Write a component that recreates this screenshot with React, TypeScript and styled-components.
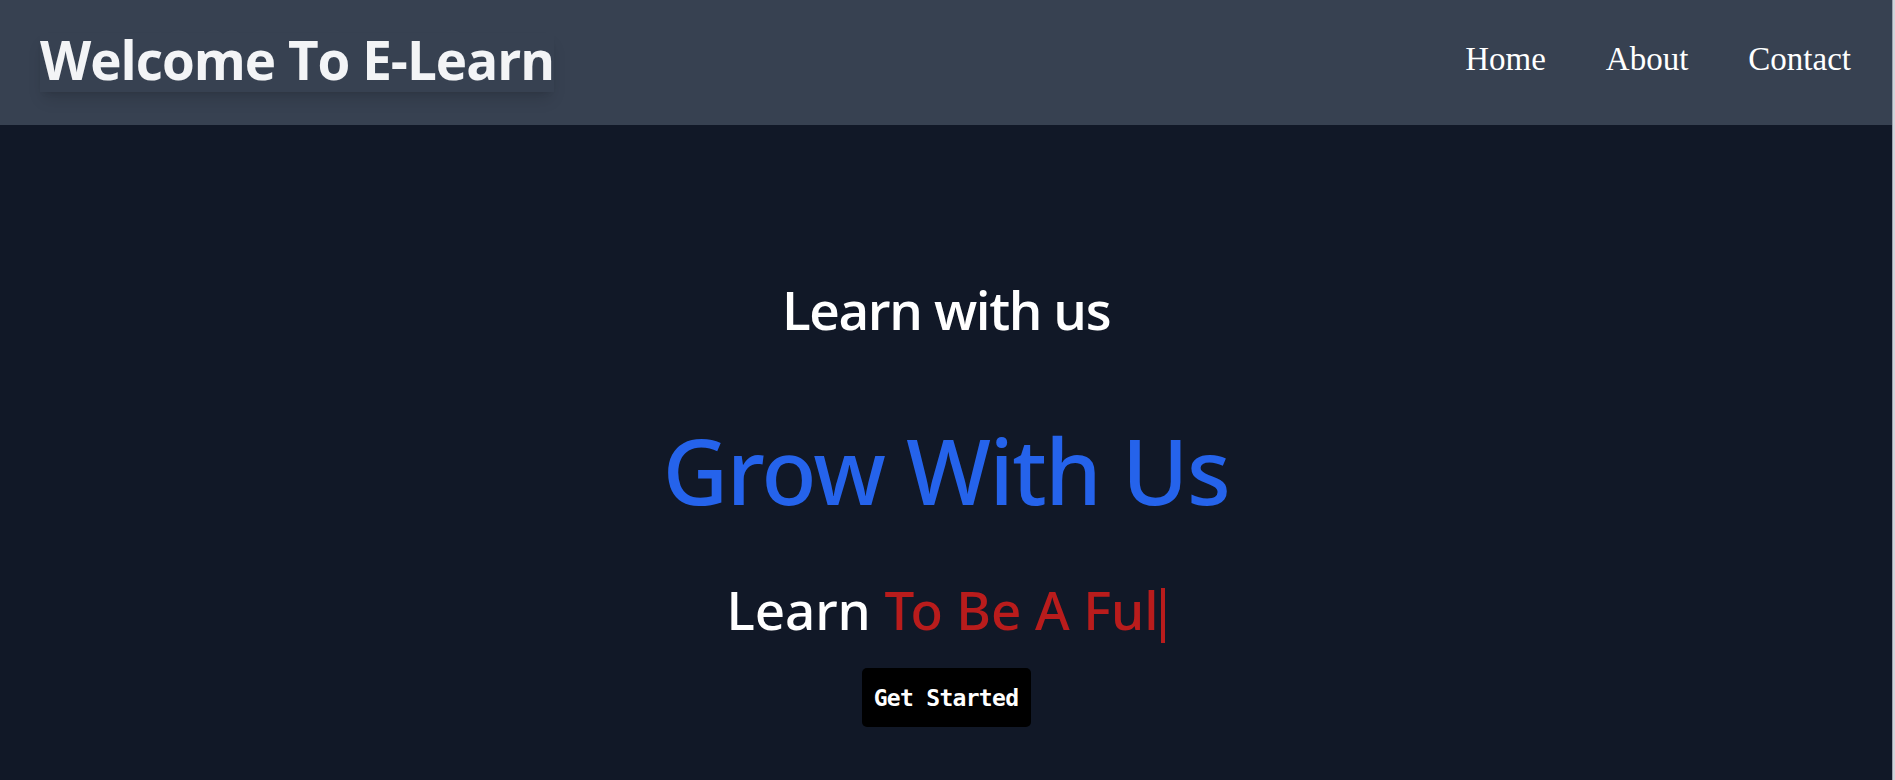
import React from "react";
import styled, { createGlobalStyle } from "styled-components";

const GlobalStyle = createGlobalStyle`
  html, body {
    margin: 0;
    padding: 0;
    height: 100%;
    background: #111827;
  }
  #root {
    height: 100%;
  }
  * { box-sizing: border-box; }
`;

const Frame = styled.div`
  display: flex;
  flex-direction: row;
  height: 100vh;
  overflow: hidden;
`;

const Main = styled.div`
  flex: 1;
  display: flex;
  flex-direction: column;
  background: #111827;
`;

const ScrollStrip = styled.div`
  width: 3px;
  flex: none;
  background: #d1d5db;
  border-left: 1px solid #9ca3af;
`;

const Header = styled.header`
  height: 125px;
  flex: none;
  background: #374151;
  display: flex;
  align-items: center;
  justify-content: space-between;
  padding: 0 41px 0 40px;
`;

const Title = styled.h1`
  margin: 0;
  font-family: "Open Sans", "Noto Sans", sans-serif;
  font-weight: 700;
  font-size: 53px;
  line-height: 1;
  letter-spacing: -1px;
  color: #f3f4f6;
  padding: 0 0 6px;
  box-shadow: 0 10px 15px -3px rgba(0, 0, 0, 0.12), 0 4px 6px -4px rgba(0, 0, 0, 0.12);
`;

const Nav = styled.nav`
  display: flex;
  gap: 60px;
  align-items: center;
  padding-bottom: 7px;
`;

const NavLink = styled.a`
  font-family: "Liberation Serif", "Times New Roman", serif;
  font-size: 33px;
  color: #ffffff;
  text-decoration: none;
  cursor: pointer;
`;

const Hero = styled.section`
  display: flex;
  flex-direction: column;
  align-items: center;
  padding-top: 158px;
  font-family: "Open Sans", "Noto Sans", sans-serif;
`;

const Lead = styled.h2`
  margin: 0;
  font-size: 53px;
  font-weight: 600;
  line-height: 1;
  letter-spacing: -1.4px;
  color: #ffffff;
`;

const Headline = styled.h1`
  margin: 89px 0 0;
  font-family: "Noto Sans", "Open Sans", sans-serif;
  font-size: 90px;
  font-weight: 500;
  line-height: 1;
  letter-spacing: -1.5px;
  color: #2563eb;
`;

const Typed = styled.h3`
  margin: 68px 0 0;
  font-family: "Noto Sans", "Open Sans", sans-serif;
  font-size: 53px;
  font-weight: 500;
  line-height: 1;
  letter-spacing: -0.1px;
  color: #ffffff;
  white-space: pre;
`;

const Accent = styled.span<{ $tone: string }>`
  color: ${(p) => p.$tone};
`;

const Cursor = styled.span`
  display: inline-block;
  width: 4px;
  height: 55px;
  margin-left: 3px;
  background: #b91c1c;
  vertical-align: -13px;
`;

const StartButton = styled.button`
  margin-top: 25px;
  height: 59px;
  width: 169px;
  padding: 0;
  border: none;
  border-radius: 5px;
  background: #000000;
  color: #ffffff;
  font-family: "DejaVu Sans Mono", "Liberation Mono", monospace;
  font-weight: 700;
  font-size: 23px;
  letter-spacing: -0.7px;
  cursor: pointer;
`;

export default function App() {
  return (
    <>
      <GlobalStyle />
      <Frame>
        <Main>
          <Header>
            <Title>Welcome To E-Learn</Title>
            <Nav>
              <NavLink>Home</NavLink>
              <NavLink>About</NavLink>
              <NavLink>Contact</NavLink>
            </Nav>
          </Header>
          <Hero>
            <Lead>Learn with us</Lead>
            <Headline>Grow With Us</Headline>
            <Typed>
              Learn <Accent $tone="#b91c1c">To Be A Ful</Accent>
              <Cursor />
            </Typed>
            <StartButton>Get Started</StartButton>
          </Hero>
        </Main>
        <ScrollStrip />
      </Frame>
    </>
  );
}
